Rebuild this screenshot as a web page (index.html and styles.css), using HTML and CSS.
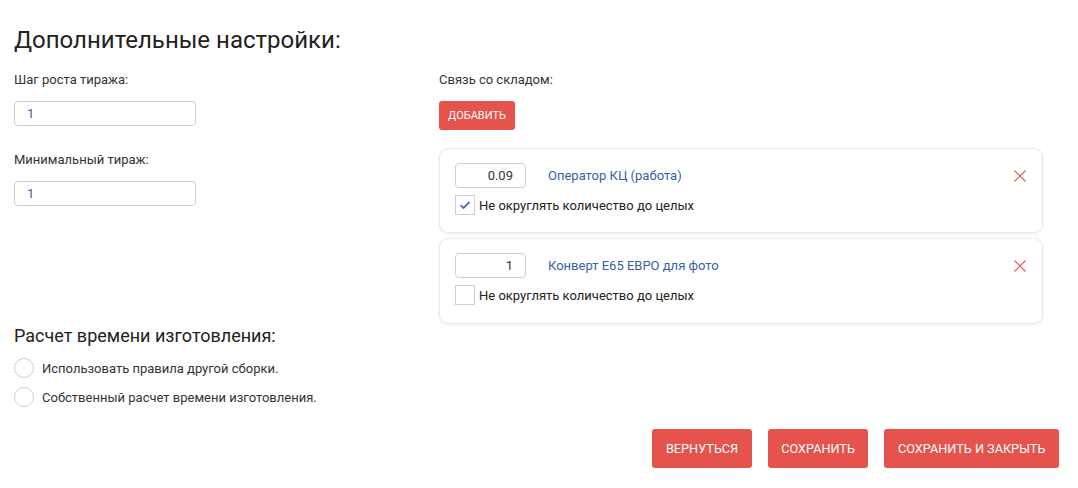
FILE: index.html
```html
<!DOCTYPE html>
<html lang="ru">
<head>
<meta charset="utf-8">
<link rel="stylesheet" href="styles.css">
</head>
<body>
<div class="page">
  <h1 class="title">Дополнительные настройки:</h1>
  <div class="cols">
    <div class="col-left">
      <div class="field">
        <label class="lbl">Шаг роста тиража:</label>
        <div class="input">1</div>
      </div>
      <div class="field field-2">
        <label class="lbl">Минимальный тираж:</label>
        <div class="input">1</div>
      </div>
    </div>
    <div class="col-right">
      <label class="lbl">Связь со складом:</label>
      <button class="btn btn-sm">ДОБАВИТЬ</button>
      <div class="cards">
        <div class="card">
          <div class="card-row">
            <div class="qty">0.09</div>
            <a class="link">Оператор КЦ (работа)</a>
            <span class="close"><svg width="12" height="12" viewBox="0 0 12 12"><path d="M0.5 0.5L11.5 11.5M11.5 0.5L0.5 11.5" stroke="#f0545a" stroke-width="1.2"/></svg></span>
          </div>
          <div class="check-row">
            <span class="checkbox"><svg width="12" height="10" viewBox="0 0 12 10"><path d="M1.5 5.2L4.5 8L10.5 1.8" fill="none" stroke="#4a6bc0" stroke-width="1.8"/></svg></span>
            <span class="check-lbl">Не округлять количество до целых</span>
          </div>
        </div>
        <div class="card">
          <div class="card-row">
            <div class="qty">1</div>
            <a class="link">Конверт Е65 ЕВРО для фото</a>
            <span class="close"><svg width="12" height="12" viewBox="0 0 12 12"><path d="M0.5 0.5L11.5 11.5M11.5 0.5L0.5 11.5" stroke="#f0545a" stroke-width="1.2"/></svg></span>
          </div>
          <div class="check-row">
            <span class="checkbox"></span>
            <span class="check-lbl">Не округлять количество до целых</span>
          </div>
        </div>
      </div>
    </div>
  </div>
  <h2 class="subtitle">Расчет времени изготовления:</h2>
  <div class="radios">
    <div class="radio-row"><span class="radio"></span><span class="radio-lbl">Использовать правила другой сборки.</span></div>
    <div class="radio-row"><span class="radio"></span><span class="radio-lbl">Собственный расчет времени изготовления.</span></div>
  </div>
  <div class="actions">
    <button class="btn btn-lg">ВЕРНУТЬСЯ</button>
    <button class="btn btn-lg">СОХРАНИТЬ</button>
    <button class="btn btn-lg">СОХРАНИТЬ И ЗАКРЫТЬ</button>
  </div>
</div>
</body>
</html>
```
FILE: styles.css
```css
* { box-sizing: border-box; }
html, body { margin: 0; padding: 0; background: #fff; }
body { font-family: Roboto, "Noto Sans", sans-serif; color: #222; }
.page { padding: 0 19px 0 14px; width: 1078px; }
.title { font-size: 24px; font-weight: 400; margin: 0; padding-top: 24px; line-height: 32px; color: #222; }
.cols { display: flex; margin-top: 16px; }
.col-left { width: 425px; }
.col-right { width: 604px; display: flex; flex-direction: column; align-items: flex-start; }
.lbl { display: block; font-size: 13px; line-height: 16px; color: #333; }
.field .input { margin-top: 13px; }
.field-2 { margin-top: 26px; }
.input { width: 182px; height: 25px; border: 1px solid #ccd; border-radius: 4px; font-size: 13px; line-height: 23px; padding-left: 12px; color: #3a5ea8; }
.btn { background: #e5534c; color: #fff; border: 0; border-radius: 3px; font-family: Roboto, sans-serif; cursor: pointer; }
.btn-sm { margin-top: 13px; height: 29px; width: 76px; font-size: 11px; padding: 0; }
.cards { margin-top: 18px; width: 604px; display: flex; flex-direction: column; gap: 5px; }
.card { border: 1px solid #e8e8e8; border-radius: 9px; box-shadow: 0 1px 3px rgba(0,0,0,0.08); height: 85px; padding: 14px 15px 0 15px; }
.card + .card { height: 86px; }
.card-row { display: flex; align-items: center; height: 25px; }
.qty { width: 71px; height: 25px; border: 1px solid #ccd; border-radius: 4px; font-size: 13px; line-height: 23px; text-align: right; padding-right: 12px; color: #333; }
.link { margin-left: 22px; font-size: 13px; color: #3a5ea8; flex: 1; }
.close { width: 12px; height: 12px; margin-right: 1px; display: flex; }
.check-row { display: flex; align-items: center; margin-top: 7px; }
.checkbox { width: 20px; height: 20px; border: 1px solid #ccd; display: flex; align-items: center; justify-content: center; }
.check-lbl { margin-left: 4px; font-size: 13px; color: #222; }
.subtitle { font-size: 18px; font-weight: 400; margin: 0; line-height: 24px; color: #222; }
.radios { margin-top: 10px; display: flex; flex-direction: column; gap: 9px; }
.radio-row { display: flex; align-items: center; }
.radio { width: 20px; height: 20px; border: 1px solid #ccc; border-radius: 50%; }
.radio-lbl { margin-left: 8px; font-size: 13px; color: #333; }
.actions { display: flex; justify-content: flex-end; gap: 16px; margin-top: 22px; }
.btn-lg { height: 39px; font-size: 12.7px; padding: 0 13.5px; }
```
